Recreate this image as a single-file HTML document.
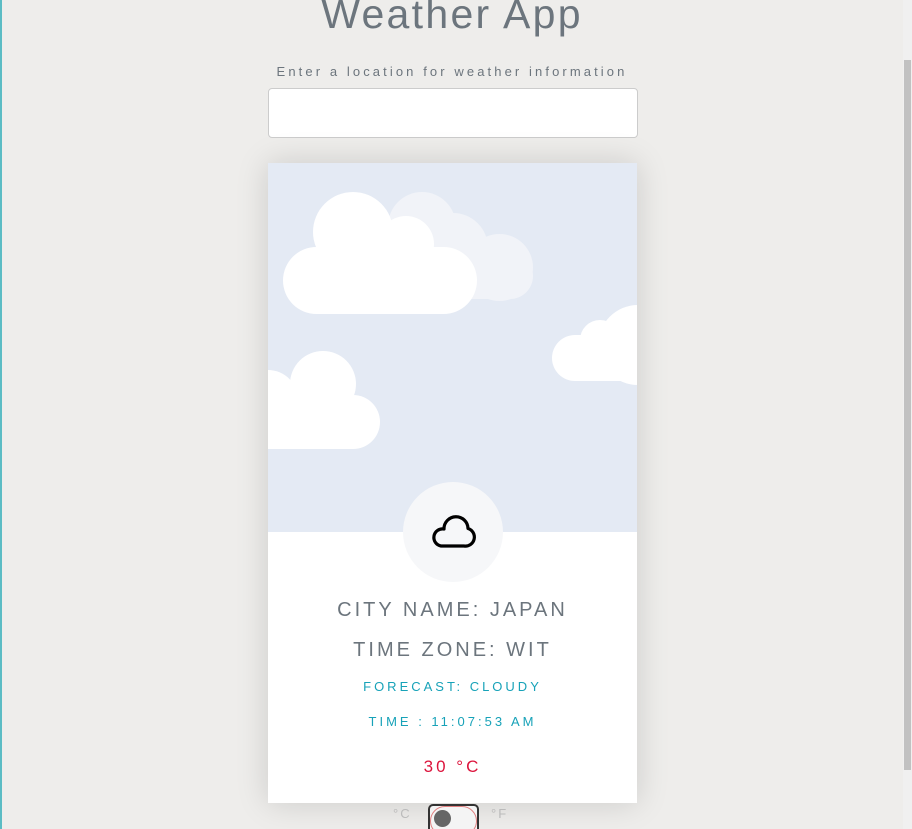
<!DOCTYPE html>
<html><head><style>
html,body{overflow:hidden}
body{margin:0;width:912px;height:829px;background:#eeedeb;font-family:"Liberation Sans",sans-serif;position:relative}
.lb{position:absolute;left:0;top:0;width:2px;height:829px;background:#5bbcc4}
.sb{position:absolute;right:0;top:0;width:9px;height:829px;background:#f0f0f0}
.th{position:absolute;right:1px;top:60px;width:7px;height:710px;background:#c1c1c1}
h1{position:absolute;top:-9px;left:0;width:904px;text-align:center;margin:0;font-weight:400;font-size:41px;letter-spacing:2.3px;color:#6c757d}
.lbl{position:absolute;top:64px;left:0;width:904px;text-align:center;font-size:13px;letter-spacing:3.1px;color:#6c757d}
.in{position:absolute;left:268px;top:88px;width:368px;height:48px;background:#fff;border:1px solid #ccc;border-radius:4px}
.card{position:absolute;left:268px;top:163px;width:369px;height:640px;background:#fff;box-shadow:0 0 30px rgba(0,0,0,.15);overflow:hidden}
.sky{position:absolute;left:0;top:0;width:369px;height:369px;background:#e4eaf4}
.c{position:absolute;border-radius:50%}
.w{background:#fff}.l{background:#f1f3f8}
.r{position:absolute;border-radius:40px}
.ic{position:absolute;left:135px;top:319px;width:100px;height:100px;border-radius:50%;background:#f6f7f9}
.t{position:absolute;left:0;width:369px;text-align:center}
.tg{position:absolute;left:428px;top:804px;width:51px;height:25px;border:2px solid #333;border-bottom:none;border-radius:5px 5px 0 0;background:#f4f4f4;box-sizing:border-box;overflow:hidden}
</style></head><body>
<div class="lb"></div><div class="sb"><div class="th"></div></div>
<h1>Weather App</h1>
<div class="lbl">Enter a location for weather information</div>
<div class="in"></div>
<div class="card"><div class="sky">
<div class="c l" style="left:120px;top:29px;width:68px;height:68px"></div>
<div class="c l" style="left:150px;top:50px;width:70px;height:70px"></div>
<div class="c l" style="left:198px;top:71px;width:67px;height:67px"></div>
<div class="r l" style="left:170px;top:90px;width:95px;height:46px"></div>
<div class="c w" style="left:45px;top:29px;width:80px;height:80px"></div>
<div class="c w" style="left:110px;top:53px;width:56px;height:56px"></div>
<div class="r w" style="left:15px;top:84px;width:194px;height:67px;border-radius:34px"></div>
<div class="c w" style="left:330px;top:142px;width:80px;height:80px"></div>
<div class="c w" style="left:312px;top:157px;width:40px;height:40px"></div>
<div class="r w" style="left:284px;top:172px;width:100px;height:46px;border-radius:23px"></div>
<div class="c w" style="left:22px;top:188px;width:66px;height:66px"></div>
<div class="c w" style="left:-30px;top:207px;width:60px;height:60px"></div>
<div class="r w" style="left:-40px;top:232px;width:152px;height:54px;border-radius:27px"></div>
</div>
<div class="ic"><svg width="100" height="100" viewBox="0 0 100 100"><path d="M38 64 H61 A9 9 0 0 0 65 46.5 A12 12 0 0 0 41 47 A8.5 8.5 0 0 0 38 64 Z" fill="none" stroke="#000" stroke-width="3.2" stroke-linejoin="round"/></svg></div>
<div class="t" style="top:436px;font-size:20px;letter-spacing:3px;color:#6c757d">CITY NAME: JAPAN</div>
<div class="t" style="top:476px;font-size:20px;letter-spacing:3px;color:#6c757d">TIME ZONE: WIT</div>
<div class="t" style="top:516px;font-size:13px;letter-spacing:3px;color:#17a2b8">FORECAST: CLOUDY</div>
<div class="t" style="top:551px;font-size:13px;letter-spacing:3px;color:#17a2b8">TIME : 11:07:53 AM</div>
<div class="t" style="top:594px;font-size:17px;letter-spacing:3px;color:#dc143c">30 °C</div>
</div>
<div style="position:absolute;left:393px;top:806px;font-size:13px;color:#bbb;letter-spacing:2px">°C</div>
<div style="position:absolute;left:491px;top:806px;font-size:13px;color:#bbb;letter-spacing:2px">°F</div>
<div class="tg"><div style="position:absolute;left:0;top:0;width:47px;height:30px;border:1px solid #e08080;border-radius:15px;box-sizing:border-box"></div><div style="position:absolute;left:4px;top:4px;width:17px;height:17px;border-radius:50%;background:#666"></div></div>
</body></html>
